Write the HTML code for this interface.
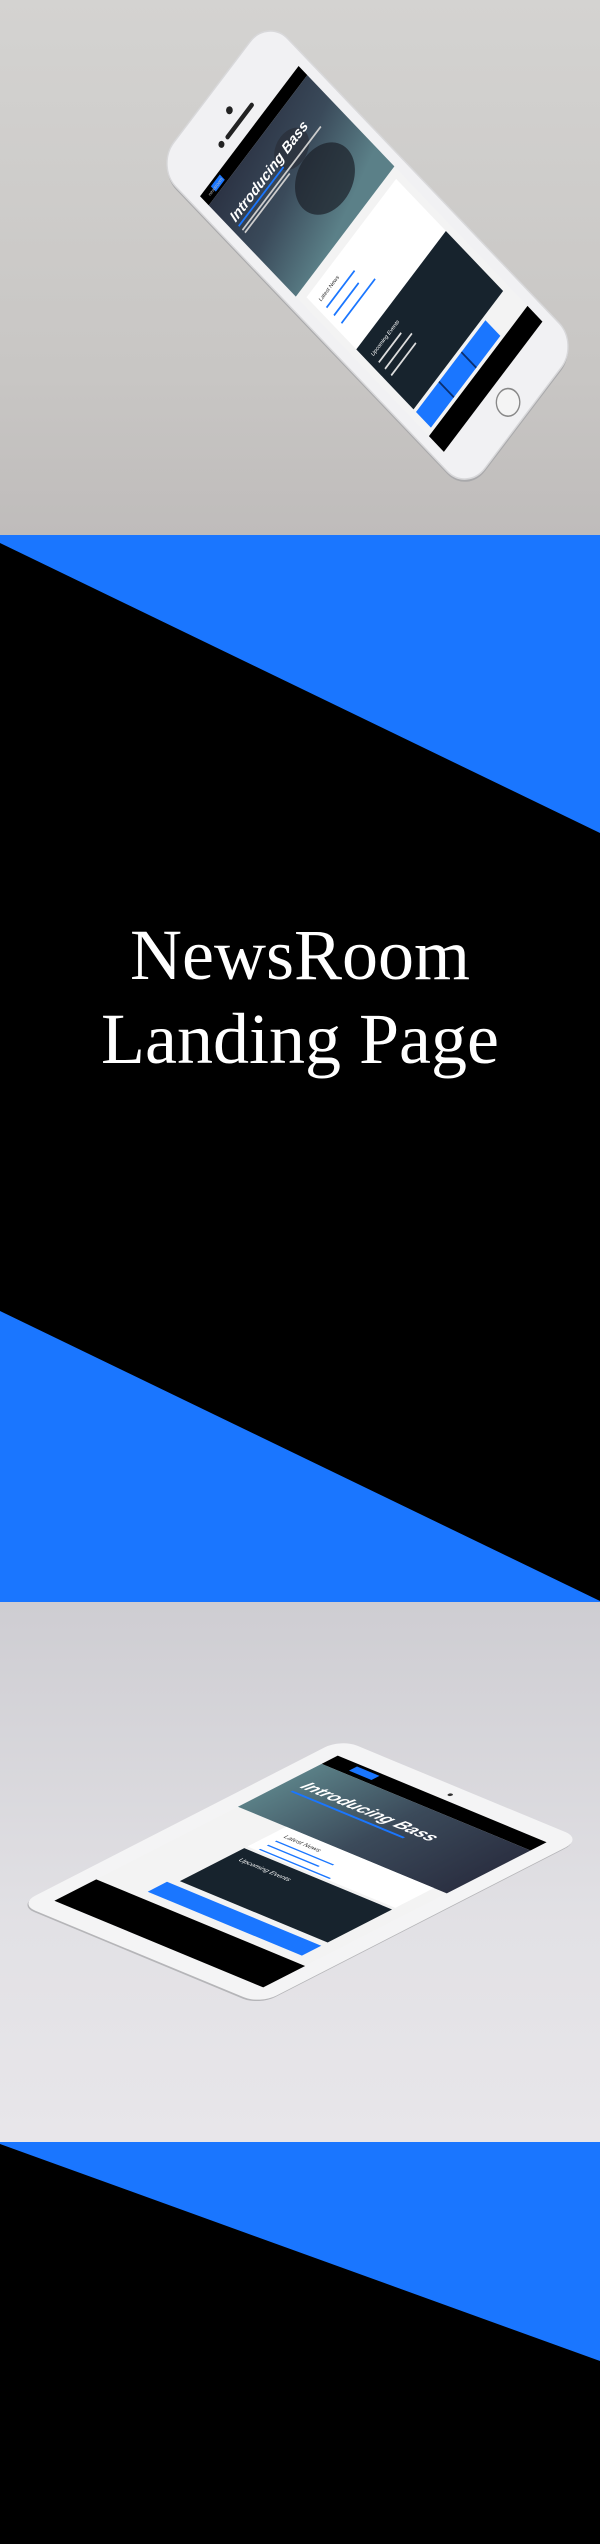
<!DOCTYPE html>
<html><head><meta charset="utf-8"><style>
html,body{margin:0;padding:0;}
body{width:600px;height:2544px;position:relative;overflow:hidden;background:#000;}
.s{position:absolute;left:0;width:600px;}
</style></head><body>
<div class="s" style="top:0;height:535px;background:linear-gradient(#d4d3d1,#c8c6c4 70%,#bfbcbb);">
<svg width="600" height="535" style="position:absolute;left:0;top:0">
<defs>
<linearGradient id="hero" x1="0" y1="0" x2="0.3" y2="1"><stop offset="0" stop-color="#2b3243"/><stop offset="0.5" stop-color="#3a4a5a"/><stop offset="1" stop-color="#5b8088"/></linearGradient>
</defs>
<g transform="matrix(1.12 -1.48 1.244 1.304 156 166)">
<rect x="-1" y="1" width="100" height="250" rx="16" fill="#a9a9ab"/>
<rect x="0" y="0" width="100" height="250" rx="16" fill="#f1f1f3" stroke="#d8d8da" stroke-width="0.8"/>
<circle cx="50" cy="14" r="2" fill="#222"/>
<rect x="38" y="21" width="24" height="2.5" rx="1.2" fill="#222"/>
<circle cx="34" cy="22" r="1.8" fill="#222"/>
<circle cx="50" cy="238" r="7" fill="#f4f4f4" stroke="#888" stroke-width="0.8"/>
<rect x="6" y="30" width="88" height="196" fill="#f3f3f3"/>
<rect x="6" y="30" width="88" height="7" fill="#000"/>
<rect x="14" y="31.5" width="8" height="4" fill="#1a76ff"/>
<text x="10" y="34.5" font-family="Liberation Sans" font-size="2.5" fill="#bbb">newsroom</text>
<rect x="6" y="37" width="88" height="70" fill="url(#hero)"/>
<ellipse cx="62" cy="80" rx="20" ry="16" fill="#1b2028" opacity="0.7"/>
<ellipse cx="60" cy="55" rx="12" ry="9" fill="#2a2e38" opacity="0.7"/>
<text x="10" y="55" font-family="Liberation Sans" font-size="8" font-style="italic" font-weight="bold" fill="#fff">Introducing Bass</text>
<rect x="10" y="57" width="40" height="1" fill="#1a76ff"/>
<rect x="10" y="60" width="70" height="1" fill="#ccc"/>
<rect x="10" y="62" width="40" height="1" fill="#ccc"/>
<rect x="10" y="112" width="80" height="40" fill="#fff"/>
<text x="14" y="120" font-family="Liberation Sans" font-size="3" fill="#333">Latest News</text>
<rect x="14" y="124" width="25" height="1" fill="#1a76ff"/>
<rect x="14" y="130" width="22" height="1" fill="#1a76ff"/>
<rect x="14" y="136" width="30" height="1" fill="#1a76ff"/>
<rect x="10" y="152" width="80" height="46" fill="#17232d"/>
<text x="14" y="162" font-family="Liberation Sans" font-size="3" fill="#fff">Upcoming Events</text>
<rect x="14" y="166" width="20" height="1" fill="#ddd"/>
<rect x="14" y="171" width="24" height="1" fill="#ddd"/>
<rect x="14" y="176" width="22" height="1" fill="#ddd"/>
<rect x="10" y="200" width="62" height="12" fill="#1a76ff"/>
<rect x="30" y="200" width="1" height="12" fill="#0a2f70"/>
<rect x="50" y="200" width="1" height="12" fill="#0a2f70"/>
<rect x="6" y="214" width="88" height="12" fill="#000"/>
</g>
</svg>
</div>
<div class="s" style="top:535px;height:1067px;background:#1a76ff;">
<svg width="600" height="1067" style="position:absolute;left:0;top:0">
<polygon points="0,8 600,298 600,1066 0,776" fill="#000"/>
</svg>
<div style="position:absolute;left:0;width:600px;top:378px;text-align:center;color:#fff;font-family:'Liberation Serif',serif;font-size:72px;line-height:84px;">NewsRoom<br>Landing Page</div>
</div>
<div class="s" style="top:1602px;height:540px;background:linear-gradient(#cecdd2,#e2e1e5 60%,#e8e6ea);">
<svg width="600" height="540" style="position:absolute;left:0;top:0">
<defs>
<linearGradient id="hero2" x1="0" y1="0" x2="1" y2="0"><stop offset="0" stop-color="#5a7f86"/><stop offset="0.5" stop-color="#3b4a5a"/><stop offset="1" stop-color="#2b3042"/></linearGradient>
</defs>
<g transform="matrix(3.213 1.333 -3.22 1.65 341 137)">
<rect x="0.3" y="0.6" width="75" height="100" rx="5" fill="#b5b5b8"/>
<rect x="0" y="0" width="75" height="100" rx="5" fill="#f4f4f5"/>
<circle cx="37.5" cy="3.5" r="0.6" fill="#333"/>
<rect x="5" y="6" width="65" height="88" fill="#f3f3f3"/>
<rect x="5" y="6" width="65" height="5" fill="#000"/>
<rect x="12" y="7" width="7" height="2.5" fill="#1a76ff"/>
<rect x="5" y="11" width="65" height="26" fill="url(#hero2)"/>
<text x="9" y="22" font-family="Liberation Sans" font-size="5" font-style="italic" font-weight="bold" fill="#fff">Introducing Bass</text>
<rect x="9" y="24" width="35" height="0.7" fill="#1a76ff"/>
<rect x="20" y="37" width="46" height="12" fill="#fff"/>
<text x="23" y="41" font-family="Liberation Sans" font-size="2" fill="#333">Latest News</text>
<rect x="23" y="43" width="18" height="0.5" fill="#1a76ff"/>
<rect x="23" y="45.5" width="16" height="0.5" fill="#1a76ff"/>
<rect x="23" y="48" width="22" height="0.5" fill="#1a76ff"/>
<rect x="20" y="50" width="46" height="20" fill="#17232d"/>
<text x="23" y="55" font-family="Liberation Sans" font-size="2" fill="#fff">Upcoming Events</text>
<rect x="18" y="72" width="48" height="6" fill="#1a76ff"/>
<rect x="5" y="81" width="65" height="13" fill="#000"/>
</g>
</svg>
</div>
<div class="s" style="top:2142px;height:402px;background:#000;">
<svg width="600" height="402" style="position:absolute;left:0;top:0">
<polygon points="0,0 600,0 600,219 0,2" fill="#1a76ff"/>
</svg>
</div>
</body></html>
